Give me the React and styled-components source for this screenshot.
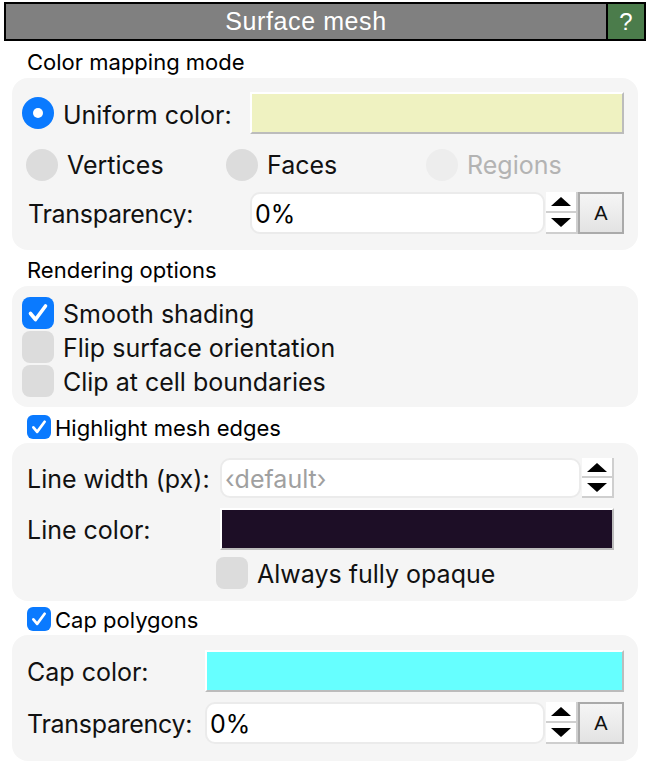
import React from "react";
import styled, { createGlobalStyle } from "styled-components";

const GlobalStyle = createGlobalStyle`
  body {
    margin: 0;
    background: #fff;
    font-family: Inter, "Liberation Sans", sans-serif;
    color: #111;
  }
  * { box-sizing: border-box; }
`;

const BLUE = "#0a7aff";

const CheckMark = ({ size }) => (
  <svg width={size} height={size} viewBox="0 0 32 32">
    <polyline
      points="8.5,16.5 13.5,22.5 23.5,9"
      fill="none"
      stroke="#fff"
      strokeWidth="3.6"
      strokeLinecap="round"
      strokeLinejoin="round"
    />
  </svg>
);

const App = () => {
  return (
    <Page>
      <GlobalStyle />
      <TitleBar>
        <Title>Surface mesh</Title>
        <HelpButton>?</HelpButton>
      </TitleBar>
      <Content>
        <SectionLabel $top={9}>Color mapping mode</SectionLabel>
        <Group $pad="14px 14px 16px 10px">
          <FormRow $label={228} $h={42}>
            <Option>
              <Radio $checked />
              <Label $lift={-2}>Uniform color:</Label>
            </Option>
            <Swatch $color="#eff2c1" />
          </FormRow>
          <ChoiceRow>
            <Option>
              <Radio />
              <Label $lift={1}>Vertices</Label>
            </Option>
            <Option>
              <Radio />
              <Label $lift={1}>Faces</Label>
            </Option>
            <Option>
              <Radio $disabled />
              <Label $lift={1} $disabled>
                Regions
              </Label>
            </Option>
          </ChoiceRow>
          <FormRow $label={228} $h={42} $top={12}>
            <Label $indent={6} $narrow>
              Transparency:
            </Label>
            <SpinField value="0%" withReset />
          </FormRow>
        </Group>

        <SectionLabel $top={8}>Rendering options</SectionLabel>
        <Group $pad="11px 14px 10px 10px">
          <CheckRow>
            <Box $checked>
              <CheckMark size={32} />
            </Box>
            <Label>Smooth shading</Label>
          </CheckRow>
          <CheckRow>
            <Box />
            <Label>Flip surface orientation</Label>
          </CheckRow>
          <CheckRow>
            <Box />
            <Label>Clip at cell boundaries</Label>
          </CheckRow>
        </Group>

        <HeaderCheck $top={8}>
          <SmallBox>
            <CheckMark size={24} />
          </SmallBox>
          <HeaderText>Highlight mesh edges</HeaderText>
        </HeaderCheck>
        <Group $pad="15px 24px 12px 15px">
          <FormRow $label={193} $h={40}>
            <Label>Line width (px):</Label>
            <SpinField placeholder="‹default›" />
          </FormRow>
          <FormRow $label={193} $h={42} $top={10}>
            <Label>Line color:</Label>
            <Swatch $color="#1d0e26" />
          </FormRow>
          <FormRow $label={193} $h={32} $top={7}>
            <span />
            <Option $shift={-4}>
              <Box />
              <Label>Always fully opaque</Label>
            </Option>
          </FormRow>
        </Group>

        <HeaderCheck $top={6}>
          <SmallBox>
            <CheckMark size={24} />
          </SmallBox>
          <HeaderText>Cap polygons</HeaderText>
        </HeaderCheck>
        <Group $pad="15px 14px 17px 15px">
          <FormRow $label={178} $h={42}>
            <Label>Cap color:</Label>
            <Swatch $color="#66ffff" />
          </FormRow>
          <FormRow $label={178} $h={42} $top={10}>
            <Label $narrow>Transparency:</Label>
            <SpinField value="0%" withReset />
          </FormRow>
        </Group>
      </Content>
    </Page>
  );
};

const SpinField = ({ value, placeholder, withReset }) => (
  <Field>
    <Input $placeholder={!value}>{value || placeholder}</Input>
    <Spinner>
      <SpinHalf>
        <Arrow $up />
      </SpinHalf>
      <SpinHalf>
        <Arrow />
      </SpinHalf>
    </Spinner>
    {withReset && <ResetButton>A</ResetButton>}
  </Field>
);

const Page = styled.div`
  width: 650px;
  padding: 2px 4px 0;
`;

const TitleBar = styled.div`
  display: flex;
  height: 39px;
  border: 2px solid #000;
  background: #808080;
`;

const Title = styled.div`
  flex: 1;
  text-align: center;
  color: #fff;
  font-family: "Liberation Sans", Arial, sans-serif;
  font-size: 25px;
  letter-spacing: 0.6px;
  line-height: 35px;
`;

const HelpButton = styled.div`
  width: 38px;
  border-left: 2px solid #000;
  background: #4b7c4b;
  color: #fff;
  font-family: "Liberation Sans", Arial, sans-serif;
  font-size: 24px;
  line-height: 35px;
  text-align: center;
`;

const Content = styled.div`
  padding: 0 8px;
`;

const SectionLabel = styled.div`
  margin-top: ${(p) => p.$top}px;
  margin-bottom: 4px;
  padding-left: 15px;
  height: 24px;
  font-size: 22px;
  line-height: 24px;
  color: #000;
`;

const Group = styled.div`
  display: flex;
  flex-direction: column;
  background: #f5f5f5;
  border-radius: 16px;
  padding: ${(p) => p.$pad};
`;

const FormRow = styled.div`
  display: grid;
  grid-template-columns: ${(p) => p.$label}px 1fr;
  align-items: center;
  height: ${(p) => p.$h}px;
  margin-top: ${(p) => p.$top || 0}px;
`;

const ChoiceRow = styled.div`
  display: grid;
  grid-template-columns: repeat(3, 200px);
  height: 32px;
  margin-top: 14px;
  padding-left: 4px;
`;

const Option = styled.div`
  display: flex;
  align-items: center;
  gap: 9px;
  margin-left: ${(p) => p.$shift || 0}px;
`;

const Label = styled.span`
  display: block;
  padding-top: 2px;
  margin-bottom: ${(p) => p.$lift || 0}px;
  font-size: 25px;
  line-height: 30px;
  letter-spacing: ${(p) => (p.$narrow ? "-0.3px" : "0")};
  white-space: nowrap;
  padding-left: ${(p) => p.$indent || 0}px;
  color: ${(p) => (p.$disabled ? "#b3b3b3" : "#111")};
`;

const Radio = styled.span`
  position: relative;
  flex: none;
  width: 32px;
  height: 32px;
  border-radius: 50%;
  background: ${(p) =>
    p.$checked ? BLUE : p.$disabled ? "#ededed" : "#dcdcdc"};

  &::after {
    content: "";
    display: ${(p) => (p.$checked ? "block" : "none")};
    position: absolute;
    left: 11px;
    top: 11px;
    width: 10px;
    height: 10px;
    border-radius: 50%;
    background: #fff;
  }
`;

const Swatch = styled.div`
  height: 42px;
  background: ${(p) => p.$color};
  border: 2px solid;
  border-color: #fff #bcbcbc #bcbcbc #fff;
`;

const Field = styled.div`
  display: flex;
  height: 100%;
`;

const Input = styled.div`
  flex: 1;
  display: flex;
  align-items: center;
  padding: 2px 0 0 3px;
  background: #fff;
  border: 2px solid #ebebeb;
  border-radius: 10px;
  font-size: 25px;
  color: ${(p) => (p.$placeholder ? "#a0a0a0" : "#000")};
`;

const Spinner = styled.div`
  display: flex;
  flex-direction: column;
  width: 32px;
  margin-left: 1px;
`;

const SpinHalf = styled.div`
  flex: 1;
  display: flex;
  align-items: center;
  justify-content: center;
  background: #fff;
  border-right: 2px solid #cfcfcf;
  border-bottom: 2px solid #cfcfcf;
`;

const Arrow = styled.span`
  width: 0;
  height: 0;
  border-left: 10px solid transparent;
  border-right: 10px solid transparent;
  ${(p) =>
    p.$up ? "border-bottom: 9px solid #000;" : "border-top: 9px solid #000;"}
`;

const ResetButton = styled.div`
  width: 46px;
  display: flex;
  align-items: center;
  justify-content: center;
  border: 2px solid #aaa;
  background: linear-gradient(#f5f5f5, #e3e3e3);
  font-family: "Liberation Sans", Arial, sans-serif;
  font-size: 20px;
  color: #111;
`;

const CheckRow = styled.div`
  display: flex;
  align-items: center;
  gap: 9px;
  height: 32px;
  & + & {
    margin-top: 2px;
  }
`;

const Box = styled.span`
  flex: none;
  display: flex;
  width: 32px;
  height: 32px;
  border-radius: 8px;
  background: ${(p) => (p.$checked ? BLUE : "#dcdcdc")};
`;

const HeaderCheck = styled.div`
  display: flex;
  align-items: center;
  gap: 4px;
  height: 24px;
  margin-top: ${(p) => p.$top}px;
  margin-bottom: 4px;
  padding-left: 15px;
  color: #000;
`;

const HeaderText = styled.span`
  padding-top: 1px;
  font-size: 22px;
  line-height: 24px;
  white-space: nowrap;
`;

const SmallBox = styled.span`
  flex: none;
  display: flex;
  width: 24px;
  height: 24px;
  border-radius: 6px;
  background: ${BLUE};
`;

export default App;
